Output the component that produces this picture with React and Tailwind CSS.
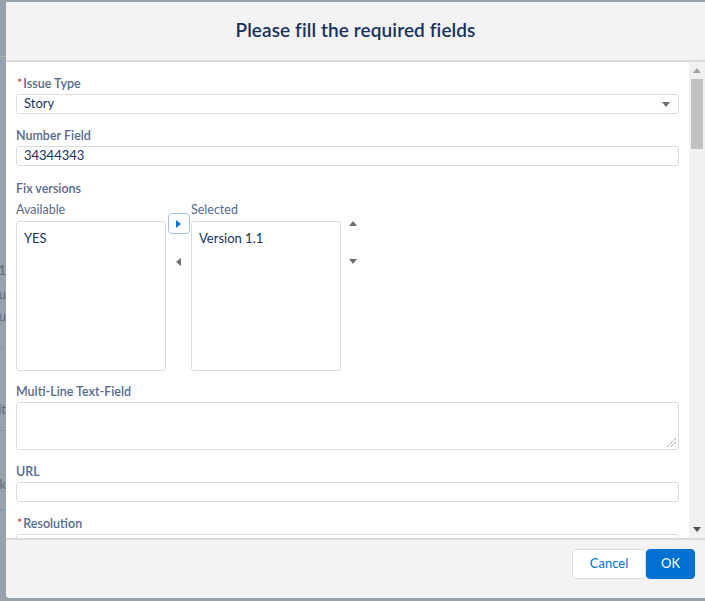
import React from 'react';

// small filled triangle used by the picklist / dueling list controls
const Tri = ({ dir = 'down', className = '' }) => {
  const pts = {
    down: '0,0 8,0 4,5',
    up: '0,5 8,5 4,0',
    right: '0,0 5,4 0,8',
    left: '5,0 0,4 5,8',
  }[dir];
  const vb = dir === 'up' || dir === 'down' ? '0 0 8 5' : '0 0 5 8';
  const size = dir === 'up' || dir === 'down' ? 'w-[8px] h-[5px]' : 'w-[5px] h-[8px]';
  return (
    <svg viewBox={vb} className={`${size} ${className}`} fill="currentColor">
      <polygon points={pts} />
    </svg>
  );
};

const Label = ({ children, required, className = '' }) => (
  <div className={`h-[16px] flex items-center text-[12.5px] leading-[16px] font-[600] text-[#54698d] ${className}`}>
    {required && <span className="text-[#c23934] mr-[1px] ml-[1px] font-normal">*</span>}
    {children}
  </div>
);

const Input = ({ value, className = '', children }) => (
  <div className={`h-[20px] mt-[2px] border border-[#dddbda] rounded-[3px] bg-white flex items-center px-[7px] text-[13px] text-[#16325c] ${className}`}>
    <span className="flex-1">{value}</span>
    {children}
  </div>
);

// sliver of the page behind the modal
const Backdrop = () => (
  <div className="w-[6px] shrink-0 flex flex-col overflow-hidden text-[13px] text-[#5f6b78]">
    <div className="h-[56px]" />
    <div className="h-[1px] bg-[#a9b3a6]" />
    <div className="h-[204px]" />
    <div className="h-[18px] flex justify-end whitespace-nowrap leading-[18px]">1.1</div>
    <div className="h-[6px]" />
    <div className="h-[18px] flex justify-end whitespace-nowrap leading-[18px]">Su</div>
    <div className="h-[4px]" />
    <div className="h-[18px] flex justify-end whitespace-nowrap leading-[18px]">Su</div>
    <div className="h-[22px]" />
    <div className="h-[1px] bg-[#8c959e]" />
    <div className="h-[52px]" />
    <div className="h-[18px] flex justify-end whitespace-nowrap leading-[18px]">it</div>
    <div className="h-[12px]" />
    <div className="h-[1px] bg-[#8c959e]" />
    <div className="h-[44px]" />
    <div className="h-[18px] flex justify-end whitespace-nowrap leading-[18px]">k</div>
    <div className="h-[16px]" />
    <div className="h-[2px] bg-[#7f9bb0]" />
  </div>
);

export default function App() {
  return (
    <div className="w-[705px] h-[601px] bg-[#98a2ac] flex overflow-hidden font-['Lato','Open_Sans',sans-serif]">
      <Backdrop />
      <div className="flex-1 mt-[2px] mb-[3px] flex flex-col rounded-bl-[4px] overflow-hidden bg-white">
        {/* header */}
        <div className="h-[60px] shrink-0 bg-[#f3f3f3] border-b-2 border-[#dddbda] flex items-center justify-center">
          <h2 className="text-[19px] font-[600] text-[#16325c] tracking-[0.1px] pb-[1px]">Please fill the required fields</h2>
        </div>

        {/* body */}
        <div className="flex-1 flex overflow-hidden bg-white">
          <div className="flex-1 pl-[10px] pr-[10px] pt-[14px] overflow-hidden">
            <Label required>Issue Type</Label>
            <Input value="Story">
              <Tri dir="down" className="text-[#706e6b] mr-[1px]" />
            </Input>

            <Label className="mt-[14px]">Number Field</Label>
            <Input value="34344343" />

            <Label className="mt-[15px]">Fix versions</Label>
            <div className="flex mt-[5px]">
              <div className="w-[150px] flex flex-col">
                <div className="h-[16px] text-[12.5px] leading-[16px] text-[#54698d]">Available</div>
                <div className="mt-[3px] h-[150px] border border-[#dddbda] rounded-[3px] bg-white px-[7px] pt-[7px] text-[13px] text-[#16325c]">
                  YES
                </div>
              </div>
              <div className="w-[25px] flex flex-col items-center pt-[11px]">
                <button className="w-[22px] h-[21px] border border-[#9fc3ea] rounded-[4px] bg-white flex items-center justify-center text-[#0070d2]">
                  <Tri dir="right" />
                </button>
                <div className="mt-[24px] h-[8px] flex items-center text-[#706e6b]">
                  <Tri dir="left" />
                </div>
              </div>
              <div className="w-[150px] flex flex-col">
                <div className="h-[16px] text-[12.5px] leading-[16px] text-[#54698d]">Selected</div>
                <div className="mt-[3px] h-[150px] border border-[#dddbda] rounded-[3px] bg-white px-[7px] pt-[7px] text-[13px] text-[#16325c]">
                  Version 1.1
                </div>
              </div>
              <div className="w-[24px] flex flex-col items-center pt-[19px] text-[#706e6b]">
                <Tri dir="up" />
                <div className="mt-[33px]">
                  <Tri dir="down" />
                </div>
              </div>
            </div>

            <Label className="mt-[13px]">Multi-Line Text-Field</Label>
            <div className="mt-[2px] h-[48px] border border-[#dddbda] rounded-[3px] bg-white flex items-end justify-end p-[2px]">
              <svg viewBox="0 0 10 10" className="w-[10px] h-[10px] text-[#6a6a6a]" stroke="currentColor" strokeWidth="1" strokeDasharray="1 1">
                <line x1="10" y1="1" x2="1" y2="10" />
                <line x1="10" y1="5" x2="5" y2="10" />
              </svg>
            </div>

            <Label className="mt-[14px]">URL</Label>
            <Input value="" />

            <Label required className="mt-[14px]">Resolution</Label>
            <Input value="" className="h-[30px]" />
          </div>

          {/* scrollbar */}
          <div className="w-[16px] shrink-0 bg-[#f1f1f1] flex flex-col items-center">
            <div className="h-[17px] flex items-center justify-center text-[#a3a3a3]">
              <Tri dir="up" className="w-[7px]" />
            </div>
            <div className="w-[12px] h-[70px] bg-[#c1c1c1]" />
            <div className="flex-1" />
            <div className="h-[17px] flex items-center justify-center text-[#505050]">
              <Tri dir="down" className="w-[7px]" />
            </div>
          </div>
        </div>

        {/* footer */}
        <div className="h-[60px] shrink-0 bg-[#f3f3f3] border-t-2 border-[#dddbda] flex items-start justify-end pr-[10px] pt-[9px]">
          <button className="w-[74px] h-[30px] bg-white border border-[#dddbda] rounded-[4px] text-[13px] text-[#0070d2]">
            Cancel
          </button>
          <button className="w-[49px] h-[30px] bg-[#0070d2] border border-[#0070d2] rounded-[4px] text-[13px] text-white">
            OK
          </button>
        </div>
      </div>
    </div>
  );
}
